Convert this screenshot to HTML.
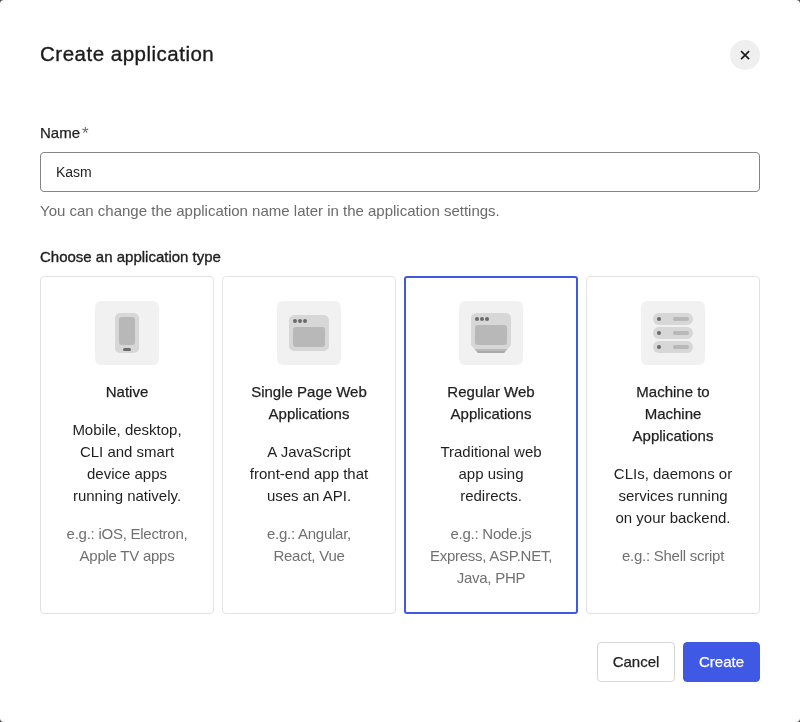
<!DOCTYPE html>
<html><head><meta charset="utf-8">
<style>
*{box-sizing:border-box;margin:0;padding:0}
html,body{width:800px;height:722px;overflow:hidden;background:#474747}
body{font-family:"Liberation Sans",sans-serif;color:#1f1f1f;position:relative}
.modal{will-change:transform;position:absolute;left:0;top:0;width:800px;height:722px;background:#fff;border-radius:4px}
.abs{position:absolute;white-space:nowrap}
.title{left:40px;top:40px;font-size:20.5px;line-height:28px;color:#1b1b1b;letter-spacing:.5px;-webkit-text-stroke:.35px #1b1b1b}
.close{position:absolute;left:730px;top:40px;width:30px;height:30px;border-radius:50%;background:#efefef}
.close svg{position:absolute;left:0;top:0}
.label{left:40px;top:122.6px;font-size:15px;line-height:20px;-webkit-text-stroke:.25px #1f1f1f}
.label .req{position:absolute;left:42px;top:1.4px;font-size:17px;color:#6a6a6a;-webkit-text-stroke:0}
.input{position:absolute;left:40px;top:152px;width:720px;height:40px;border:1px solid #848484;border-radius:4px}
.input span{position:absolute;left:15px;top:9px;font-size:14px;line-height:20px}
.help{left:40px;top:201px;font-size:15px;line-height:20px;color:#6b6b6b}
.choose{left:40px;top:246px;font-size:15px;line-height:22px;-webkit-text-stroke:.35px #1f1f1f}
.card{position:absolute;top:276px;width:174px;height:338px;border:1px solid #e3e3e3;border-radius:4px;text-align:center}
.card.sel{border:2px solid #3f59e4;border-radius:3px}
.icon{position:absolute;left:54px;top:24px;width:64px;height:64px;border-radius:6px;background:#f1f1f1}
.card.sel .icon{left:53px;top:23px}
.ct{position:absolute;left:0;right:0;top:104px;font-size:15px;line-height:22px;-webkit-text-stroke:.25px #1f1f1f}
.card.sel .ct{top:103px;left:-1px;right:-1px}
.cd,.ce{position:absolute;left:0;right:0;font-size:15px;line-height:22px}
.ce{color:#707070;letter-spacing:-.25px}
.card.sel .cd,.card.sel .ce{left:-1px;right:-1px}
.btn{position:absolute;top:642px;height:40px;border-radius:4px;font-size:15px;line-height:38px;text-align:center;-webkit-text-stroke:.25px currentColor}
.cancel{left:597px;width:78px;border:1px solid #d6d6d6;background:#fff}
.create{left:683px;width:77px;background:#3f59e4;color:#fff;border:1px solid #3f59e4}
</style></head><body>
<div class="modal">
  <div class="abs title">Create application</div>
  <div class="close"><svg width="30" height="30" viewBox="0 0 30 30"><path d="M11.1 11.1L19.1 19.1M19.1 11.1L11.1 19.1" stroke="#1b1b1b" stroke-width="1.6"/></svg></div>
  <div class="abs label">Name<span class="req">*</span></div>
  <div class="input"><span>Kasm</span></div>
  <div class="abs help">You can change the application name later in the application settings.</div>
  <div class="abs choose">Choose an application type</div>

  <div class="card" style="left:40px">
    <div class="icon"><svg width="64" height="64" viewBox="0 0 64 64"><rect x="20" y="12" width="24" height="40" rx="5" fill="#d7d7d7"/><rect x="24" y="16" width="16" height="28" rx="3" fill="#b8b8b8"/><rect x="28" y="47" width="8" height="3" rx="1.5" fill="#6a6a6a"/></svg></div>
    <div class="ct">Native</div>
    <div class="cd" style="top:142px">Mobile, desktop,<br>CLI and smart<br>device apps<br>running natively.</div>
    <div class="ce" style="top:246px">e.g.: iOS, Electron,<br>Apple TV apps</div>
  </div>
  <div class="card" style="left:222px">
    <div class="icon"><svg width="64" height="64" viewBox="0 0 64 64"><rect x="12" y="14" width="40" height="36" rx="5.5" fill="#d7d7d7"/><rect x="16" y="26" width="32" height="20" rx="3" fill="#b8b8b8"/><circle cx="18" cy="20" r="2" fill="#6a6a6a"/><circle cx="23" cy="20" r="2" fill="#6a6a6a"/><circle cx="28" cy="20" r="2" fill="#6a6a6a"/></svg></div>
    <div class="ct">Single Page Web<br>Applications</div>
    <div class="cd" style="top:164px">A JavaScript<br>front-end app that<br>uses an API.</div>
    <div class="ce" style="top:246px">e.g.: Angular,<br>React, Vue</div>
  </div>
  <div class="card sel" style="left:404px">
    <div class="icon"><svg width="64" height="64" viewBox="0 0 64 64"><defs><clipPath id="rc"><path d="M17.5 12H46.5A5.5 5.5 0 0 1 52 17.5V44L45 52H19L12 44V17.5A5.5 5.5 0 0 1 17.5 12Z"/></clipPath></defs><g clip-path="url(#rc)"><rect x="0" y="0" width="64" height="64" fill="#d7d7d7"/><rect x="0" y="48" width="64" height="2" fill="#bababa"/><rect x="0" y="50" width="64" height="3" fill="#a9a9a9"/></g><rect x="16" y="24" width="32" height="20" rx="3" fill="#b8b8b8"/><circle cx="18" cy="18" r="2" fill="#6a6a6a"/><circle cx="23" cy="18" r="2" fill="#6a6a6a"/><circle cx="28" cy="18" r="2" fill="#6a6a6a"/></svg></div>
    <div class="ct">Regular Web<br>Applications</div>
    <div class="cd" style="top:163px">Traditional web<br>app using<br>redirects.</div>
    <div class="ce" style="top:245px">e.g.: Node.js<br>Express, ASP.NET,<br>Java, PHP</div>
  </div>
  <div class="card" style="left:586px">
    <div class="icon"><svg width="64" height="64" viewBox="0 0 64 64"><rect x="12" y="12" width="40" height="12" rx="6" fill="#d7d7d7"/><circle cx="18" cy="18" r="2" fill="#6a6a6a"/><rect x="32" y="16" width="16" height="4" rx="2" fill="#b8b8b8"/><rect x="12" y="26" width="40" height="12" rx="6" fill="#d7d7d7"/><circle cx="18" cy="32" r="2" fill="#6a6a6a"/><rect x="32" y="30" width="16" height="4" rx="2" fill="#b8b8b8"/><rect x="12" y="40" width="40" height="12" rx="6" fill="#d7d7d7"/><circle cx="18" cy="46" r="2" fill="#6a6a6a"/><rect x="32" y="44" width="16" height="4" rx="2" fill="#b8b8b8"/></svg></div>
    <div class="ct">Machine to<br>Machine<br>Applications</div>
    <div class="cd" style="top:186px">CLIs, daemons or<br>services running<br>on your backend.</div>
    <div class="ce" style="top:268px">e.g.: Shell script</div>
  </div>

  <div class="btn cancel">Cancel</div>
  <div class="btn create">Create</div>
</div>
</body></html>
